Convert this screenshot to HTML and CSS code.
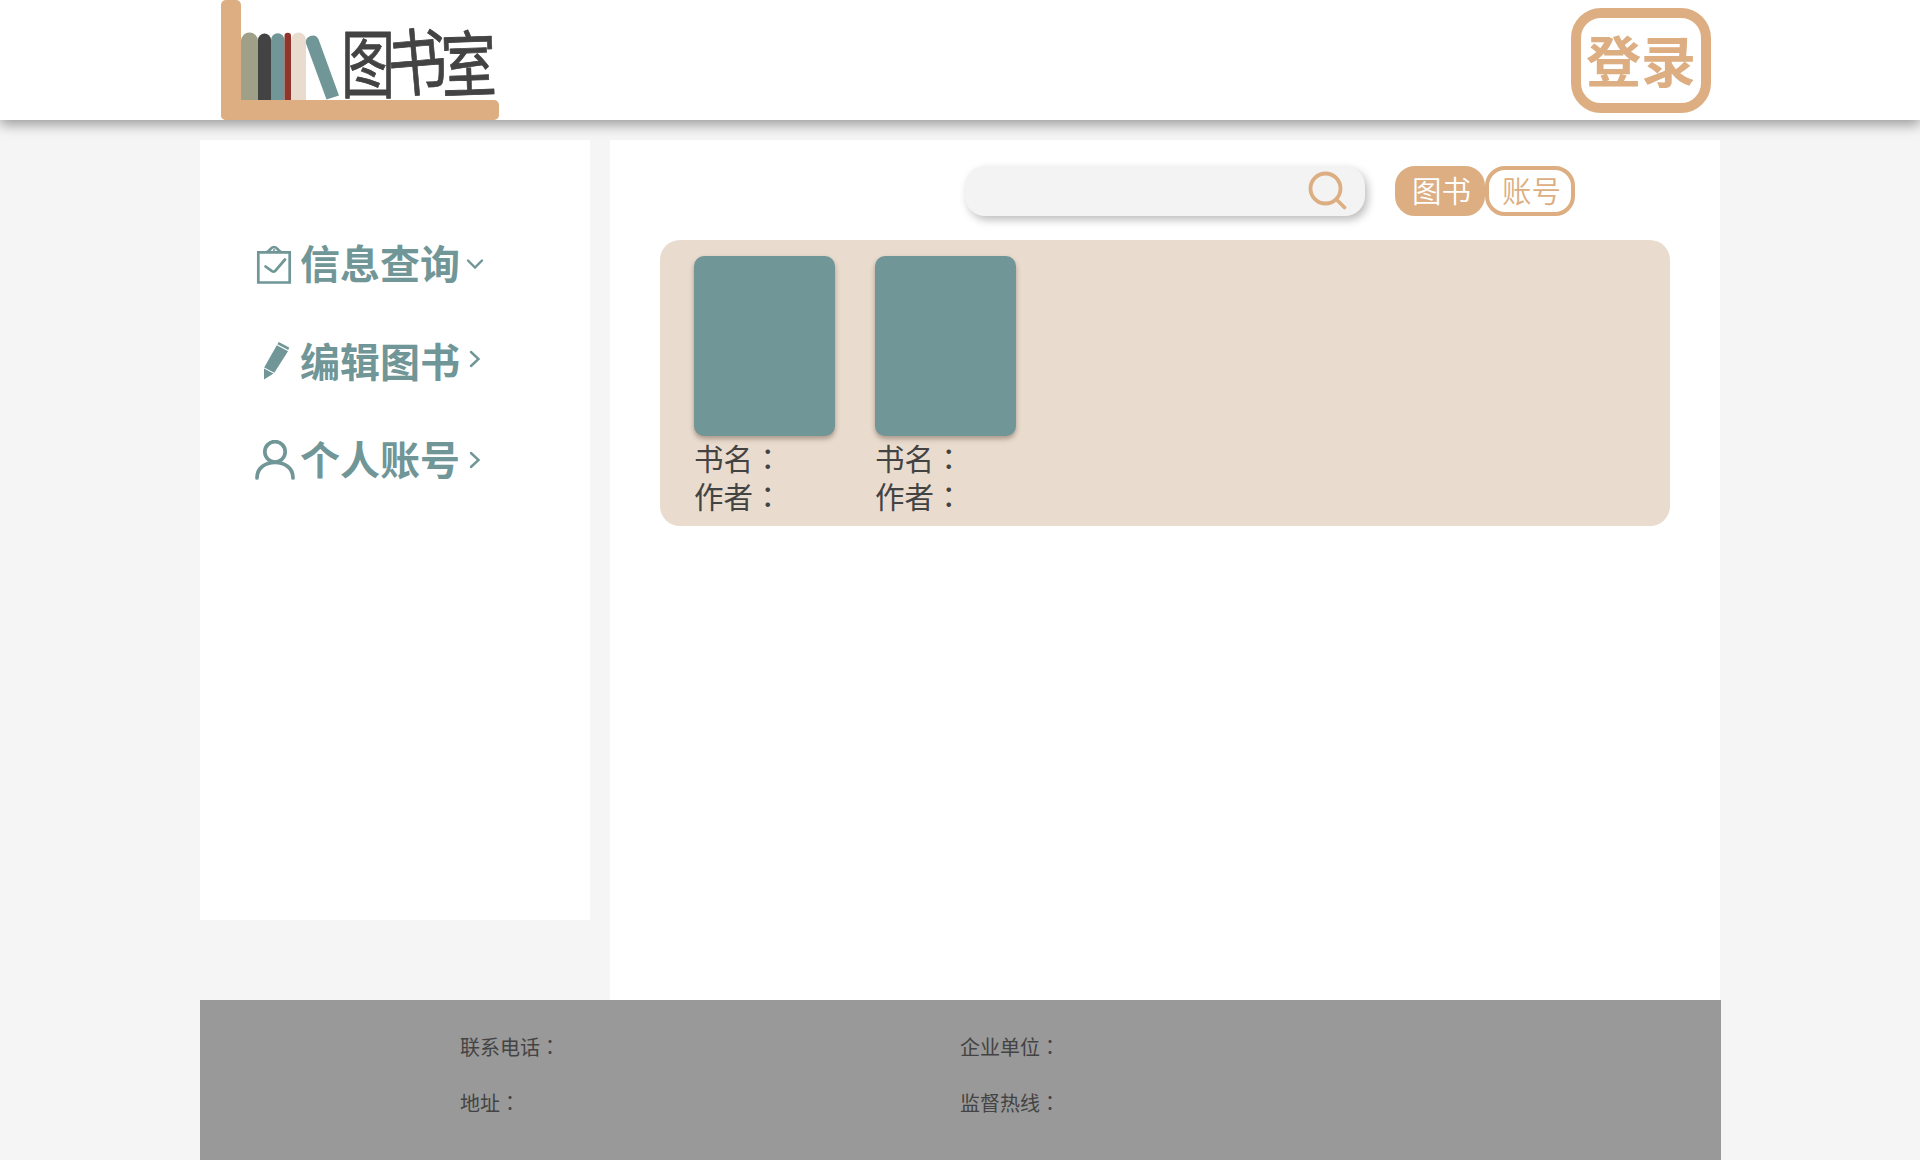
FILE: index.html
```html
<!DOCTYPE html>
<html lang="zh-CN">
<head>
<meta charset="utf-8">
<title>图书室</title>
<link rel="stylesheet" href="styles.css">
</head>
<body>
<header class="header">
  <div class="header-inner">
    <svg class="logo" width="278" height="120" viewBox="0 0 278 120" role="img" aria-label="图书室">
      <path fill="#a09f88" d="M20 100V41a8.300 8.300 0 0 1 17 0v59z"/>
      <path fill="#434343" d="M37 100V40a6.500 6.500 0 0 1 13 0v60z"/>
      <path fill="#709697" d="M50 100V40a6.500 6.500 0 0 1 13.500 0v60z"/>
      <path fill="#8f352b" d="M63.500 100V36a3.250 3.250 0 0 1 6.500 0v64z"/>
      <path fill="#e9dccf" d="M70 100V40a7.300 7.300 0 0 1 15 0v60z"/>
      <path fill="#709697" d="M85 43.500a6.700 6.700 0 0 1 12.400-4.500L118 95.500 105.500 99.500z"/>
      <rect fill="#dcae82" width="20" height="120" rx="5"/>
      <rect fill="#dcae82" y="100" width="278" height="20" rx="5"/>
      <rect fill="#dcae82" y="95" width="20" height="20"/>
      <g class="logo-text">
        <text transform="translate(120 91.500) scale(1.020 1.420)">图</text>
        <text transform="translate(169 92) rotate(-5) scale(1.120 1.380)">书</text>
        <text transform="translate(221 92) rotate(-2) scale(1.040 1.360)">室</text>
      </g>
    </svg>
    <a class="login">登录</a>
  </div>
</header>
<div class="page">
  <nav class="sidebar">
    <a class="nav-item">
      <svg class="nav-icon" width="40" height="40" viewBox="0 0 40 40"><g fill="none" stroke="#709697" stroke-width="2.700"><path d="M3.300 8.300h31.400v30.200H3.300z"/><path d="M11.500 8c4-.5 3.500-5 7.500-5s3.500 4.500 7.500 5"/><circle cx="19" cy="6" r=".8" stroke-width="1"/><path d="M10.500 22.500 17 27.200q1.500 1 3 0L30 15.500" stroke-linecap="round"/></g></svg>
      <span class="nav-label">信息查询</span>
      <svg class="arrow" width="18" height="18" viewBox="0 0 18 18"><path d="m2 5.500 7 7 7-7"/></svg>
    </a>
    <a class="nav-item">
      <svg class="nav-icon" width="40" height="40" viewBox="0 0 40 40"><g fill="#709697"><path d="M21.800 3.200 33 9.300 19.300 30.800 9.200 25.500z"/><path d="m9 26.500 9.500 5L9 37.500z"/><path d="m23.700 0 10.500 5.500-.9 2.400-10.900-5.700z"/></g></svg>
      <span class="nav-label">编辑图书</span>
      <svg class="arrow arrow-up" width="18" height="18" viewBox="0 0 18 18"><path d="m5 2 7.500 7L5 16"/></svg>
    </a>
    <a class="nav-item">
      <svg class="nav-icon" width="40" height="40" viewBox="0 0 40 40"><g fill="none" stroke="#709697" stroke-width="3.700" stroke-linecap="round"><circle cx="20" cy="11.800" r="10.200"/><path d="M2 38c0-10 8-15.500 18-15.500S38 28 38 38"/></g></svg>
      <span class="nav-label">个人账号</span>
      <svg class="arrow" width="18" height="18" viewBox="0 0 18 18"><path d="m5 2 7.500 7L5 16"/></svg>
    </a>
  </nav>
  <main class="content">
    <div class="toolbar">
      <div class="search">
        <svg width="40" height="40" viewBox="0 0 40 40"><g fill="none" stroke="#dcae82" stroke-width="3.800" stroke-linecap="round"><circle cx="17.500" cy="17.500" r="15"/><path d="m28.500 28.500 8 8"/></g></svg>
      </div>
      <div class="tabs">
        <a class="tab tab-active">图书</a>
        <a class="tab">账号</a>
      </div>
    </div>
    <section class="books">
      <article class="book">
        <div class="cover"></div>
        <p>书名<span class="colon" lang="zh-TW">：</span></p>
        <p>作者<span class="colon" lang="zh-TW">：</span></p>
      </article>
      <article class="book">
        <div class="cover"></div>
        <p>书名<span class="colon" lang="zh-TW">：</span></p>
        <p>作者<span class="colon" lang="zh-TW">：</span></p>
      </article>
    </section>
  </main>
</div>
<footer class="footer">
  <p>联系电话<span class="colon" lang="zh-TW">：</span></p>
  <p>企业单位<span class="colon" lang="zh-TW">：</span></p>
  <p>地址<span class="colon" lang="zh-TW">：</span></p>
  <p>监督热线<span class="colon" lang="zh-TW">：</span></p>
</footer>
</body>
</html>
```
FILE: styles.css
```css
* { box-sizing: border-box; }
body {
  margin: 0;
  height: 1160px;
  overflow: hidden;
  background: #f5f5f5;
  color: #434343;
  font-family: "Noto Sans CJK SC", sans-serif;
}
p { margin: 0; }
svg { display: block; flex: none; }
/* full-width colon centred in its cell */
.colon {
  font-family: "Noto Sans CJK TC", sans-serif;
  line-height: 1;
}
.header {
  height: 120px;
  background: #fff;
  box-shadow: 0 5px 12px rgba(0, 0, 0, .36);
}
.header-inner {
  width: 1520px;
  margin: 0 auto;
  padding: 0 9px 0 21px;
  display: flex;
  justify-content: space-between;
}
.logo-text {
  font-size: 53px;
  font-weight: 400;
  fill: #434343;
  stroke: #434343;
  stroke-width: .6px;
  stroke-linejoin: round;
}
.login {
  width: 140px;
  height: 105px;
  margin-top: 8px;
  border: 10px solid #dcae82;
  border-radius: 30px;
  color: #dcae82;
  font-size: 55px;
  font-weight: 700;
  line-height: 80px;
  display: flex;
  justify-content: center;
}
.page {
  position: relative;
  width: 1520px;
  margin: 20px auto 0;
  display: flex;
  gap: 20px;
  align-items: flex-start;
}
.sidebar {
  width: 390px;
  height: 780px;
  padding: 94px 0 0 55px;
  background: #fff;
}
.nav-item {
  height: 60px;
  margin-bottom: 38px;
  display: flex;
  align-items: center;
  color: #709697;
}
.nav-label {
  padding-bottom: 4px;
  font-size: 40px;
  font-weight: 700;
  line-height: 56px;
}
.nav-icon { margin-right: 5px; }
.arrow {
  margin-left: 6px;
  fill: none;
  stroke: #709697;
  stroke-width: 2.4;
  stroke-linecap: round;
}
.arrow-up { margin-bottom: 6px; }
.content {
  width: 1110px;
  height: 860px;
  padding: 26px 50px 0;
  background: #fff;
}
.toolbar {
  display: flex;
  gap: 30px;
  padding-left: 305px;
}
.search {
  width: 400px;
  height: 50px;
  padding: 5px 17px;
  border-radius: 20px;
  background: #f3f3f3;
  box-shadow: 3px 4px 8px rgba(0, 0, 0, .26);
  display: flex;
  justify-content: flex-end;
}
.tabs { display: flex; }
.tab {
  width: 90px;
  height: 50px;
  padding-left: 3px;
  border: 4px solid #dcae82;
  border-radius: 20px;
  color: #dcae82;
  font-size: 29.5px;
  font-weight: 350;
  line-height: 39px;
  text-align: center;
}
.tab-active {
  background: #dcae82;
  color: #fff;
}
.books {
  height: 286px;
  margin-top: 24px;
  padding: 16px 34px;
  border-radius: 20px;
  background: #e9dccf;
  display: flex;
  gap: 40px;
}
.book {
  width: 141px;
  font-size: 29.5px;
  line-height: 38px;
}
.cover {
  height: 180px;
  margin-bottom: 2px;
  border-radius: 10px;
  background: #709697;
  box-shadow: 0 3px 5px rgba(60, 30, 20, .36);
}
.footer {
  width: 1521px;
  height: 160px;
  margin-left: 200px;
  padding: 32px 0 0 260px;
  background: #999;
  display: grid;
  grid-template-columns: 500px 1fr;
  grid-auto-rows: 56px;
  font-size: 20px;
  line-height: 30px;
}
```
